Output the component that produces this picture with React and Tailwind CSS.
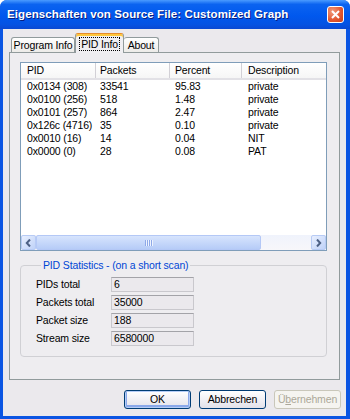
import React from 'react';

const rows = [
  ['0x0134 (308)', '33541', '95.83', 'private'],
  ['0x0100 (256)', '518', '1.48', 'private'],
  ['0x0101 (257)', '864', '2.47', 'private'],
  ['0x126c (4716)', '35', '0.10', 'private'],
  ['0x0010 (16)', '14', '0.04', 'NIT'],
  ['0x0000 (0)', '28', '0.08', 'PAT'],
];

const stats = [
  ['PIDs total', '6'],
  ['Packets total', '35000'],
  ['Packet size', '188'],
  ['Stream size', '6580000'],
];

const cols = ['w-[75px] pl-[6px]', 'w-[74px] pl-[4px]', 'w-[72px] pl-[5px]', 'flex-1 pl-[6px]'];

const Arrow = ({ left }) => (
  <svg width="7" height="8" viewBox="0 0 7 8">
    <path
      d={left ? 'M5 0.5 L1.8 4 L5 7.5' : 'M2 0.5 L5.2 4 L2 7.5'}
      fill="none"
      stroke="#4d6185"
      strokeWidth="2"
    />
  </svg>
);

const ScrollBtn = ({ left }) => (
  <div className="w-[15px] h-[15px] flex items-center justify-center rounded-[2px] border border-[#b7cbf5] bg-gradient-to-br from-[#e8effe] to-[#bfd2f8]">
    <Arrow left={left} />
  </div>
);

const Button = ({ children, def, disabled }) => (
  <div
    className={
      'w-[67px] h-[19px] flex items-center justify-center rounded-[3px] border ' +
      (disabled
        ? 'border-[#c9c7ba] bg-[#f5f4f0] text-[#aca899]'
        : 'border-[#003c74] bg-gradient-to-b from-[#ffffff] to-[#e3e2ea]') +
      (def ? ' shadow-[inset_0_0_0_1px_#b5cdf7,inset_0_-1px_0_2px_#8aa8ea]' : '')
    }
  >
    {children}
  </div>
);

export default function App() {
  return (
    <div className="w-[350px] h-[419px] flex flex-col rounded-t-[7px] overflow-hidden bg-[#0b55e3] font-['Liberation_Sans',Arial,sans-serif] text-[10.5px] tracking-[-0.15px] leading-[13px] text-black">
      {/* title bar */}
      <div className="h-[29px] flex items-center justify-between pl-[7px] pr-[6px] bg-[linear-gradient(to_bottom,#4a9bff_0%,#0b63f0_15%,#0058ee_55%,#0552e2_85%,#0a48d2_100%)]">
        <span className="text-white font-bold text-[11.5px] tracking-[0.1px] [text-shadow:1px_1px_0_#0a1f80]">
          Eigenschaften von Source File: Customized Graph
        </span>
        <div className="w-[17px] h-[17px] flex items-center justify-center rounded-[3px] border border-white bg-[radial-gradient(circle_at_30%_30%,#f09a7c,#e2552e_60%,#c8401c)]">
          <svg width="9" height="9" viewBox="0 0 9 9">
            <path d="M1 1 L8 8 M8 1 L1 8" stroke="white" strokeWidth="2" />
          </svg>
        </div>
      </div>

      {/* dialog body */}
      <div className="flex-1 flex flex-col ml-[3px] mr-[4px] mb-[3px] bg-[#ebe9ed] px-[6px] pt-[4px]">
        {/* tabs */}
        <div className="h-[19px] flex items-end pl-[2px]">
          <div className="w-[64px] h-[15px] flex items-center justify-center rounded-t-[3px] border border-b-0 border-[#919b9c] bg-gradient-to-b from-white to-[#ecebe8]">
            Program Info
          </div>
          <div className="relative z-10 -mb-[1px] w-[49px] h-[20px] flex items-center justify-center rounded-t-[3px] border border-b-0 border-[#919b9c] border-t-[#e68b2c] bg-[#f0eff2] shadow-[inset_0_2px_0_#ffc73c]">
            <span className="mt-[1px] px-[1px] border border-dotted border-black leading-[12px]">PID Info</span>
          </div>
          <div className="w-[35px] h-[15px] flex items-center justify-center rounded-t-[3px] border border-b-0 border-l-0 border-[#919b9c] bg-gradient-to-b from-white to-[#ecebe8]">
            About
          </div>
        </div>

        {/* tab panel */}
        <div className="h-[328px] border border-[#919b9c] bg-[#eeedf0] pl-[10px] pt-[9px]">
          {/* list view */}
          <div className="w-[307px] h-[189px] flex flex-col border border-[#7f9db9] bg-white">
            <div className="h-[17px] flex border-b-[2px] border-[#e2e1e6] bg-gradient-to-b from-white to-[#f6f6f6]">
              {['PID', 'Packets', 'Percent', 'Description'].map((h, i) => (
                <div
                  key={h}
                  className={cols[i] + ' flex items-center ' + (i < 3 ? 'border-r border-[#d2d0d6]' : '')}
                >
                  {h}
                </div>
              ))}
            </div>
            <div className="flex-1">
              {rows.map((r) => (
                <div key={r[0]} className="h-[13px] flex items-center">
                  {r.map((c, i) => (
                    <div key={i} className={cols[i]}>
                      {c}
                    </div>
                  ))}
                </div>
              ))}
            </div>
            {/* horizontal scrollbar */}
            <div className="h-[15px] flex bg-[#f5f5f8]">
              <ScrollBtn left />
              <div className="w-[225px] h-[15px] flex items-center justify-center rounded-[2px] border border-[#b4c8f6] bg-gradient-to-b from-[#d7e4fd] to-[#b6ccf7]">
                <div className="flex gap-[1px]">
                  {[0, 1, 2, 3].map((g) => (
                    <div key={g} className="w-[1px] h-[6px] bg-[#8ea9e8] shadow-[1px_0_0_#eef3fe]" />
                  ))}
                </div>
              </div>
              <div className="flex-1 bg-gradient-to-b from-[#f0f3fc] to-[#f7f7fa]" />
              <ScrollBtn />
            </div>
          </div>

          {/* statistics group */}
          <fieldset className="mt-[8px] w-[307px] h-[98px] rounded-[4px] border border-[#d0d0d4] px-[15px] pt-[5px]">
            <legend className="ml-[5px] px-[2px] text-[#0046d5]">PID Statistics - (on a short scan)</legend>
            <div className="grid grid-cols-[75px_83px] gap-y-[3px]">
              {stats.map(([k, v]) => (
                <React.Fragment key={k}>
                  <div className="h-[15px] flex items-center">{k}</div>
                  <div className="h-[15px] flex items-center pl-[2px] border border-[#c9c8cd] border-t-[#a3a3a8] bg-[#ebe9ed]">
                    {v}
                  </div>
                </React.Fragment>
              ))}
            </div>
          </fieldset>
        </div>

        {/* buttons */}
        <div className="mt-[10px] flex justify-end gap-[8px] -mr-[1px]">
          <Button def>OK</Button>
          <Button>Abbrechen</Button>
          <Button disabled>
            Ü<span className="underline">b</span>ernehmen
          </Button>
        </div>
      </div>
    </div>
  );
}
